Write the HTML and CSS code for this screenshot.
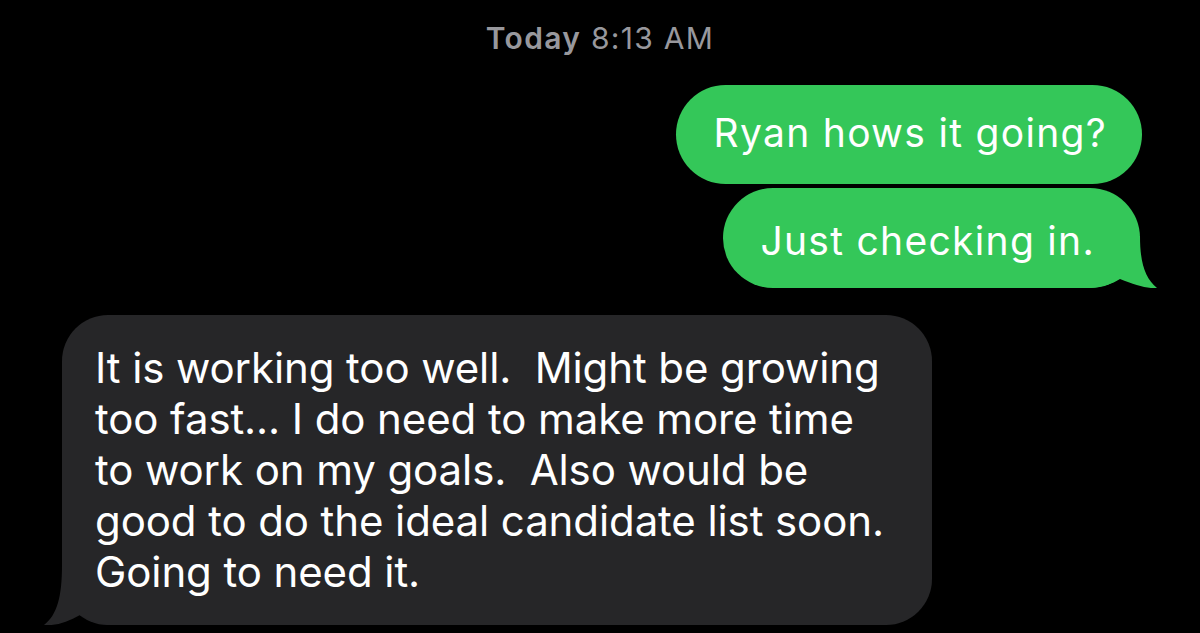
FILE: index.html
```html
<!DOCTYPE html>
<html lang="en">
<head>
<meta charset="utf-8">
<title>Messages</title>
<link rel="stylesheet" href="styles.css">
</head>
<body>
<div class="thread">
  <div class="stamp"><b>Today</b> 8:13 AM</div>
  <div class="out-group">
    <div class="bubble out first">Ryan hows it going?</div>
    <div class="bubble out last">Just checking in.<svg class="tail tail-out" viewBox="0 0 70 52" width="70" height="52"><path d="M0 0 H50 C50 27 55 42 67 52 C58 53 45 49 30 43 C22 48 12 51 0 52 Z"/></svg></div>
  </div>
  <div class="bubble in">It is working too well.&nbsp; Might be growing<br>too fast... I do need to make more time<br>to work on my goals.&nbsp; Also would be<br>good to do the ideal candidate list soon.<br>Going to need it.<svg class="tail tail-in" viewBox="0 0 70 60" width="70" height="60"><path d="M70 0 H22 C22 32 17 50 4 60 C16 61 28 57 40 50 C50 56 60 59 70 60 Z"/></svg></div>
</div>
</body>
</html>
```

FILE: styles.css
```css
html, body {
  margin: 0;
  padding: 0;
  background: #000;
}

body {
  width: 1200px;
  height: 633px;
  overflow: hidden;
  font-family: Inter, "Liberation Sans", Arial, sans-serif;
}

.thread {
  display: flex;
  flex-direction: column;
}

.stamp {
  margin-top: 21px;
  text-align: center;
  font-size: 30px;
  line-height: 34px;
  color: #98989d;
  letter-spacing: 1.3px;
}

.stamp b {
  font-weight: 600;
}

.out-group {
  margin-top: 30px;
  padding-right: 58px;
  display: flex;
  flex-direction: column;
  align-items: flex-end;
  gap: 4px;
}

.bubble {
  position: relative;
  z-index: 0;
  color: #fff;
}

.bubble.out {
  background: #34c759;
  border-radius: 50px;
  font-size: 39px;
  letter-spacing: 1.3px;
  white-space: nowrap;
}

.bubble.first {
  line-height: 95px;
  padding: 0 35px 4px 38px;
}

.bubble.last {
  line-height: 95px;
  padding: 5px 45px 0 37px;
  margin-right: 2px;
}

.tail {
  position: absolute;
  bottom: 0;
  z-index: -1;
  display: block;
}

.tail-out {
  right: -20px;
  fill: #34c759;
}

.bubble.in {
  align-self: flex-start;
  margin: 27px 0 0 62px;
  width: 870px;
  box-sizing: border-box;
  padding: 27px 20px 28px 33px;
  background: #262628;
  border-radius: 46px;
  font-size: 42px;
  line-height: 51px;
  letter-spacing: -0.1px;
  white-space: nowrap;
}

.tail-in {
  left: -22px;
  fill: #262628;
}
```
